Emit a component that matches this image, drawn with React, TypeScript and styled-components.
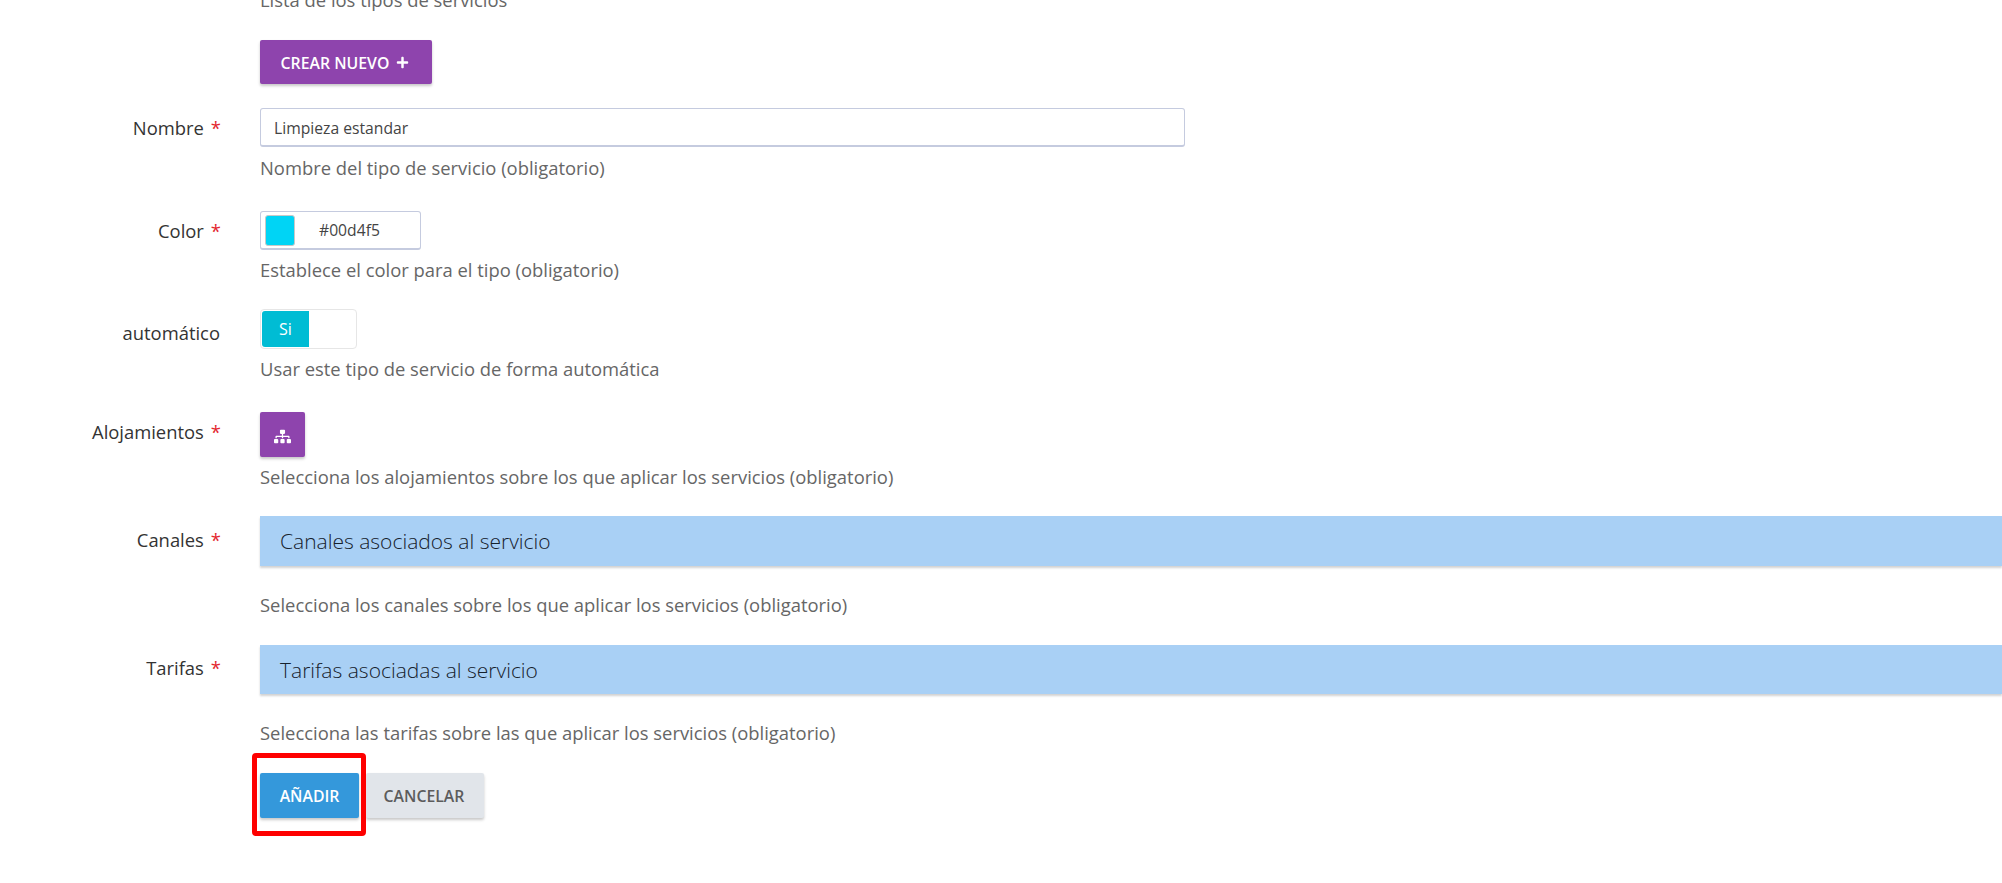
import * as React from 'react';
import { FaPlus, FaSitemap } from 'react-icons/fa';
import styled, { createGlobalStyle } from 'styled-components';

const App: React.FC = () => (
  <>
    <GlobalStyle />
    <Page>
      <Row $top={-12}>
        <span />
        <Field>
          <Help>Lista de los tipos de servicios</Help>
          <CreateButton>
            CREAR NUEVO <FaPlus size={13} />
          </CreateButton>
        </Field>
      </Row>

      <Row $top={24}>
        <Label $top={8} $required>
          Nombre
        </Label>
        <Field>
          <TextInput>Limpieza estandar</TextInput>
          <Help $top={9}>Nombre del tipo de servicio (obligatorio)</Help>
        </Field>
      </Row>

      <Row $top={31}>
        <Label $top={8} $required>
          Color
        </Label>
        <Field>
          <ColorInput>
            <Swatch />
            <ColorValue>#00d4f5</ColorValue>
          </ColorInput>
          <Help $top={8}>Establece el color para el tipo (obligatorio)</Help>
        </Field>
      </Row>

      <Row $top={27}>
        <Label $top={12}>automático</Label>
        <Field>
          <Toggle>
            <ToggleOn>Si</ToggleOn>
          </Toggle>
          <Help $top={8}>Usar este tipo de servicio de forma automática</Help>
        </Field>
      </Row>

      <Row $top={31}>
        <Label $top={8} $required>
          Alojamientos
        </Label>
        <Field>
          <IconButton>
            <FaSitemap size={17} />
          </IconButton>
          <Help $top={8}>Selecciona los alojamientos sobre los que aplicar los servicios (obligatorio)</Help>
        </Field>
      </Row>

      <Row $top={27}>
        <Label $top={12} $required>
          Canales
        </Label>
        <Field>
          <Banner $height={50}>Canales asociados al servicio</Banner>
          <Help $top={27}>Selecciona los canales sobre los que aplicar los servicios (obligatorio)</Help>
        </Field>
      </Row>

      <Row $top={28}>
        <Label $top={11} $required>
          Tarifas
        </Label>
        <Field>
          <Banner $height={49}>Tarifas asociadas al servicio</Banner>
          <Help $top={27}>Selecciona las tarifas sobre las que aplicar los servicios (obligatorio)</Help>
        </Field>
      </Row>

      <Row $top={28}>
        <span />
        <Actions>
          <SubmitButton>
            AÑADIR
            <Highlight />
          </SubmitButton>
          <CancelButton>CANCELAR</CancelButton>
        </Actions>
      </Row>
    </Page>
  </>
);

const GlobalStyle = createGlobalStyle`
  html, body {
    margin: 0;
    height: 100%;
    background: #fff;
    font-family: "Open Sans", "Liberation Sans", sans-serif;
    color: #3a3a3a;
  }
`;

const Page = styled.main`
  height: 883px;
  overflow: hidden;
`;

const Row = styled.div<{ $top: number }>`
  display: grid;
  grid-template-columns: 221px 1fr;
  column-gap: 39px;
  margin-top: ${(p) => p.$top}px;
`;

const Label = styled.label<{ $top: number; $required?: boolean }>`
  padding-top: ${(p) => p.$top}px;
  padding-right: ${(p) => (p.$required ? 0 : 1)}px;
  text-align: right;
  font-size: 18.4px;
  line-height: 24px;
  color: #333;

  &::after {
    content: ${(p) => (p.$required ? "'*'" : 'none')};
    margin-left: 7px;
    color: #e3262e;
  }
`;

const Field = styled.div`
  min-width: 0;
  display: flex;
  flex-direction: column;
  align-items: flex-start;
`;

const Help = styled.p<{ $top?: number }>`
  margin: ${(p) => p.$top ?? 0}px 0 0;
  font-size: 18.4px;
  line-height: 24px;
  color: #666;
  white-space: nowrap;
`;

const BaseButton = styled.button`
  border: 0;
  border-radius: 2px;
  padding: 1px 0 0;
  font-family: inherit;
  font-weight: 600;
  font-size: 15.8px;
  color: #fff;
  box-shadow: 0 2px 3px rgba(0, 0, 0, 0.22);
  display: flex;
  align-items: center;
  justify-content: center;
`;

const CreateButton = styled(BaseButton)`
  margin-top: 28px;
  width: 172px;
  height: 44px;
  padding-right: 2px;
  gap: 7px;
  background: #8e44ad;
`;

const IconButton = styled(BaseButton)`
  width: 45px;
  height: 45px;
  padding-top: 3px;
  background: #8e44ad;
`;

const TextInput = styled.div`
  box-sizing: border-box;
  width: 925px;
  height: 39px;
  padding: 1px 13px 0;
  display: flex;
  align-items: center;
  border: 1px solid #c5cbdf;
  border-bottom-width: 2px;
  border-radius: 3px;
  font-size: 15.7px;
  color: #444;
`;

const ColorInput = styled(TextInput)`
  width: 161px;
  padding: 0 4px;
`;

const Swatch = styled.span`
  box-sizing: border-box;
  width: 30px;
  height: 31px;
  border: 1px solid #c8c8c8;
  border-radius: 3px;
  background: #00d4f5;
`;

const ColorValue = styled.span`
  margin-left: 24px;
`;

const Toggle = styled.div`
  box-sizing: border-box;
  width: 97px;
  height: 40px;
  padding: 1px;
  border: 1px solid #e6e6e6;
  border-radius: 4px;
  overflow: hidden;
`;

const ToggleOn = styled.div`
  width: 47px;
  height: 36px;
  display: flex;
  align-items: center;
  justify-content: center;
  border-radius: 3px 0 0 3px;
  background: #00bcd4;
  color: #fff;
  font-size: 16px;
`;

const Banner = styled.div<{ $height: number }>`
  box-sizing: border-box;
  width: 100%;
  height: ${(p) => p.$height}px;
  padding: 0 20px;
  display: flex;
  align-items: center;
  background: #a9d0f5;
  box-shadow: 0 2px 2px rgba(0, 0, 0, 0.18);
  font-size: 21px;
  font-weight: 300;
  color: #16212c;
`;

const Actions = styled.div`
  display: flex;
  gap: 7px;
`;

const SubmitButton = styled(BaseButton)`
  position: relative;
  width: 99px;
  height: 45px;
  background: #3498db;
`;

const CancelButton = styled(BaseButton)`
  width: 118px;
  height: 45px;
  padding-right: 2px;
  background: #e1e5ea;
  color: #5c5c5c;
`;

const Highlight = styled.span`
  position: absolute;
  left: -8px;
  top: -20px;
  box-sizing: border-box;
  width: 114px;
  height: 83px;
  border: 5px solid #fe0000;
  border-radius: 4px;
  pointer-events: none;
`;

export default App;
